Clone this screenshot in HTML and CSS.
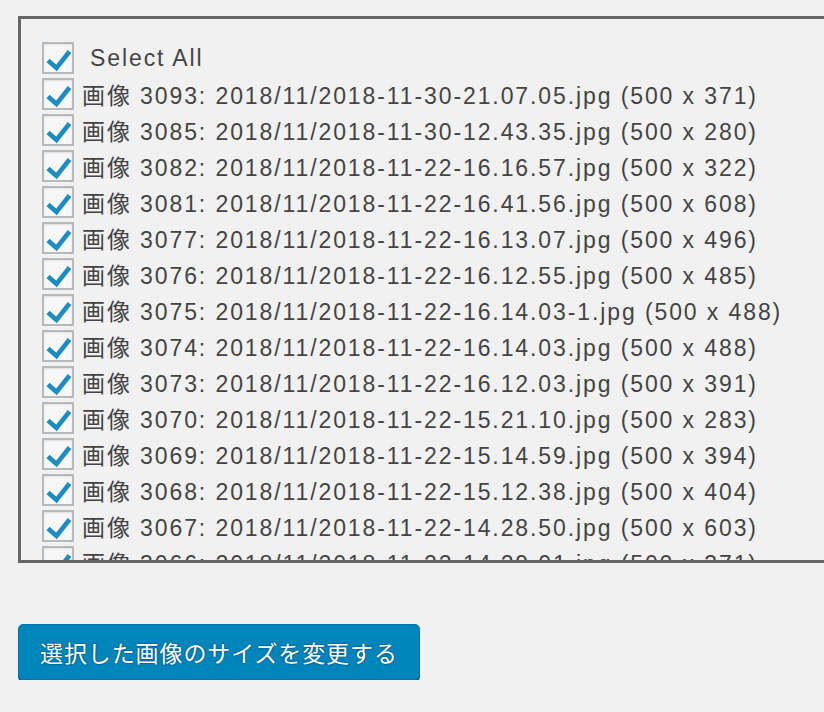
FILE: index.html
```html
<!DOCTYPE html>
<html lang="ja">
<head>
  <meta charset="UTF-8" />
  <meta name="viewport" content="width=device-width, initial-scale=1.0" />
  <title>画像のサイズ変更</title>
  <link rel="stylesheet" href="styles.css">
</head>
<body>
  <svg class="defs" width="0" height="0">
    <symbol id="tick" viewBox="0 0 32 32">
      <path d="M6 18.5 L14.5 26 L27.5 9.5" fill="none" stroke="#1e8cbe" stroke-width="4.6" stroke-linejoin="miter" />
    </symbol>
  </svg>

  <div class="image-list">
    <label class="row select-all"><span class="check"><svg><use href="#tick"/></svg></span><span class="name">Select All</span></label>
    <label class="row"><span class="check"><svg><use href="#tick"/></svg></span><span class="name">画像 3093: 2018/11/2018-11-30-21.07.05.jpg (500 x 371)</span></label>
    <label class="row"><span class="check"><svg><use href="#tick"/></svg></span><span class="name">画像 3085: 2018/11/2018-11-30-12.43.35.jpg (500 x 280)</span></label>
    <label class="row"><span class="check"><svg><use href="#tick"/></svg></span><span class="name">画像 3082: 2018/11/2018-11-22-16.16.57.jpg (500 x 322)</span></label>
    <label class="row"><span class="check"><svg><use href="#tick"/></svg></span><span class="name">画像 3081: 2018/11/2018-11-22-16.41.56.jpg (500 x 608)</span></label>
    <label class="row"><span class="check"><svg><use href="#tick"/></svg></span><span class="name">画像 3077: 2018/11/2018-11-22-16.13.07.jpg (500 x 496)</span></label>
    <label class="row"><span class="check"><svg><use href="#tick"/></svg></span><span class="name">画像 3076: 2018/11/2018-11-22-16.12.55.jpg (500 x 485)</span></label>
    <label class="row"><span class="check"><svg><use href="#tick"/></svg></span><span class="name">画像 3075: 2018/11/2018-11-22-16.14.03-1.jpg (500 x 488)</span></label>
    <label class="row"><span class="check"><svg><use href="#tick"/></svg></span><span class="name">画像 3074: 2018/11/2018-11-22-16.14.03.jpg (500 x 488)</span></label>
    <label class="row"><span class="check"><svg><use href="#tick"/></svg></span><span class="name">画像 3073: 2018/11/2018-11-22-16.12.03.jpg (500 x 391)</span></label>
    <label class="row"><span class="check"><svg><use href="#tick"/></svg></span><span class="name">画像 3070: 2018/11/2018-11-22-15.21.10.jpg (500 x 283)</span></label>
    <label class="row"><span class="check"><svg><use href="#tick"/></svg></span><span class="name">画像 3069: 2018/11/2018-11-22-15.14.59.jpg (500 x 394)</span></label>
    <label class="row"><span class="check"><svg><use href="#tick"/></svg></span><span class="name">画像 3068: 2018/11/2018-11-22-15.12.38.jpg (500 x 404)</span></label>
    <label class="row"><span class="check"><svg><use href="#tick"/></svg></span><span class="name">画像 3067: 2018/11/2018-11-22-14.28.50.jpg (500 x 603)</span></label>
    <label class="row"><span class="check"><svg><use href="#tick"/></svg></span><span class="name">画像 3066: 2018/11/2018-11-22-14.29.01.jpg (500 x 371)</span></label>
  </div>

  <button class="resize-button">選択した画像のサイズを変更する</button>
</body>
</html>
```

FILE: styles.css
```css
html, body {
  overflow: hidden;
}
body {
  font-family: "Liberation Sans", "Noto Sans CJK JP", sans-serif;
  background-color: #f1f1f1;
  color: #444;
  margin: 0;
  padding: 16px 0 0 18px;
}
.defs {
  position: absolute;
}
.image-list {
  width: 900px;
  height: 520px;
  border: 3px solid #666;
  padding: 21px 0 0 21px;
  overflow: hidden;
}
.row {
  display: flex;
  align-items: center;
  height: 36px;
  font-size: 23px;
  letter-spacing: 1.9px;
  white-space: nowrap;
}
.check {
  box-sizing: border-box;
  width: 32px;
  height: 32px;
  flex: none;
  border: 2px solid #b4b9be;
  background-color: #f7f7f7;
  box-shadow: inset 0 1px 2px rgba(0, 0, 0, 0.1);
  margin-right: 8px;
  position: relative;
}
.check svg {
  position: absolute;
  left: -2px;
  top: -2px;
  width: 32px;
  height: 32px;
}
.select-all .name {
  margin-left: 8px;
}
.resize-button {
  display: block;
  margin-top: 61px;
  height: 56px;
  padding: 0 21px;
  background-color: #0085ba;
  border: 1px solid #0073aa;
  border-radius: 5px;
  box-shadow: 0 2px 0 #006799;
  color: #fff;
  font-family: "Noto Sans CJK JP", sans-serif;
  font-size: 23px;
  letter-spacing: 0.9px;
  text-shadow: 0 -1px 1px #006799, 1px 0 1px #006799, 0 1px 1px #006799, -1px 0 1px #006799;
  cursor: pointer;
}
```
